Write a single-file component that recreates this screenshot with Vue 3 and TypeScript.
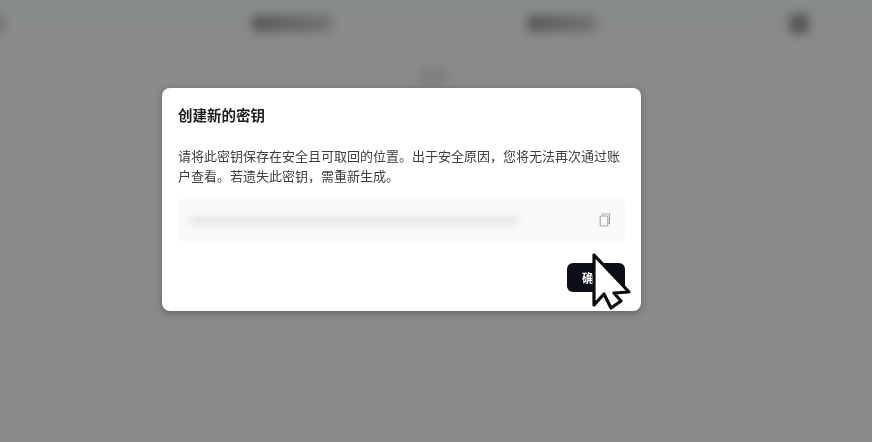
<script setup lang="ts">
const navItems: { kind: string }[] = [
  { kind: 'edge' },
  { kind: 'wide' },
  { kind: 'mid' },
  { kind: 'small' },
]
const comma = '\uFF0C'
const title = '创建新的密钥'
const message = `请将此密钥保存在安全且可取回的位置。出于安全原因${comma}您将无法再次通过账户查看。若遗失此密钥${comma}需重新生成。`
</script>

<template>
  <div class="page">
    <header class="topbar">
      <span v-for="(item, i) in navItems" :key="i" class="nav-blob" :class="item.kind"></span>
    </header>
    <div class="behind"><span class="behind-blob"></span></div>

    <div class="overlay">
      <section class="modal">
        <h2 class="title">{{ title }}</h2>
        <p class="message">{{ message }}</p>
        <div class="key-field">
          <span class="key-value"></span>
          <svg class="copy" viewBox="0 0 12 14" width="12" height="14" fill="none" stroke="#a9abae" stroke-width="1.2">
            <path d="M3.5 2.5V1h7v9.5H9" />
            <rect x="1.2" y="3" width="7.6" height="10" rx="1" fill="#f8f8f9" />
          </svg>
        </div>
        <div class="actions">
          <button class="confirm" type="button">确定</button>
        </div>
      </section>
    </div>

    <svg class="cursor" viewBox="0 0 42 60" width="42" height="60">
      <path
        d="M3 3 L3 53 L13 42 L20 56 L30 49 L23 41 L38 40 Z"
        fill="#ffffff"
        stroke="#0b0b0d"
        stroke-width="3.2"
        stroke-linejoin="round"
      />
    </svg>
  </div>
</template>

<style scoped>
.page {
  position: relative;
  width: 872px;
  height: 442px;
  overflow: hidden;
  background: #8a8a8a;
  font-family: "Inter", "Noto Sans CJK SC", sans-serif;
}
.topbar {
  position: relative;
  height: 44px;
  background: linear-gradient(#878b8b, #8a8a8b);
  border-bottom: 1px solid #878787;
}
.nav-blob {
  position: absolute;
  top: 15px;
  height: 17px;
  border-radius: 5px;
  filter: blur(5px);
  background: linear-gradient(90deg, #58595a, #737475);
}
.nav-blob.edge { left: -8px; width: 12px; background: #707070; }
.nav-blob.wide { left: 252px; width: 80px; }
.nav-blob.mid { left: 527px; width: 70px; }
.nav-blob.small { left: 789px; width: 20px; height: 20px; top: 14px; background: #58595a; }
.behind {
  display: flex;
  justify-content: center;
  padding-top: 23px;
}
.behind-blob {
  width: 26px;
  height: 16px;
  margin-left: -4px;
  background: #7e7e7e;
  filter: blur(5px);
}
.overlay {
  position: absolute;
  inset: 0;
  padding: 88px 0 0 162px;
  box-sizing: border-box;
}
.modal {
  width: 479px;
  height: 223px;
  box-sizing: border-box;
  padding: 19px 16px;
  background: #ffffff;
  border-radius: 8px;
  box-shadow: 0 2px 7px rgba(40, 40, 40, 0.4);
  display: flex;
  flex-direction: column;
}
.title {
  margin: 0;
  font-size: 14.5px;
  line-height: 18px;
  font-weight: 700;
  color: #1d1e20;
  filter: blur(0.5px);
}
.message {
  margin: 22px 0 0;
  font-size: 13px;
  line-height: 19.5px;
  color: #3c3e42;
  filter: blur(0.5px);
}
.key-field {
  margin-top: 12px;
  height: 44px;
  border-radius: 6px;
  background: #f9f9fa;
  display: flex;
  align-items: center;
  justify-content: space-between;
  padding: 0 14px 0 12px;
  filter: blur(0.6px);
}
.key-value {
  width: 328px;
  height: 9px;
  border-radius: 4px;
  background: #e6e7e9;
  filter: blur(3px);
}
.actions {
  margin-top: 21px;
  display: flex;
  justify-content: flex-end;
}
.confirm {
  width: 58px;
  height: 29px;
  border: none;
  border-radius: 6px;
  background: #0c0f17;
  color: #ffffff;
  font-family: inherit;
  font-size: 12px;
  font-weight: 700;
  letter-spacing: 4px;
  padding: 0 0 0 4px;
  filter: blur(0.4px);
}
.cursor {
  position: absolute;
  left: 591px;
  top: 252px;
}
</style>
